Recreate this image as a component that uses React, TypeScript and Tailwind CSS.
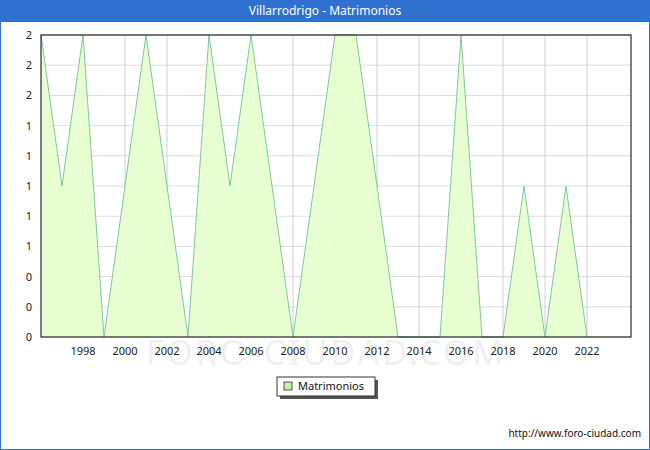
export default function App() {
  const data = [2,1,2,0,1,2,1,0,2,1,2,1,0,1,2,2,1,0,0,0,2,0,0,1,0,1,0];
  const x0 = 40, dx = 21, yb = 337, yt = 35;
  const y = (v: number) => yb - (v / 2) * (yb - yt);
  const pts = data.map((v, i) => `${x0 + i * dx},${y(v)}`).join(" ");
  const area = `${x0},${yb} ${pts} ${x0 + (data.length - 1) * dx},${yb}`;
  const yl = ["2","2","2","1","1","1","1","1","0","0","0"];
  const years = [1998,2000,2002,2004,2006,2008,2010,2012,2014,2016,2018,2020,2022];
  return (
    <div className="w-[650px] h-[450px] bg-white border border-t-0 border-[#3070d0] flex flex-col font-['DejaVu_Sans',sans-serif]">
      <div className="h-[22px] bg-[#3070d0] text-white text-[12px] flex items-center justify-center">Villarrodrigo - Matrimonios</div>
      <svg width="648" height="427" className="block">
        <g transform="translate(0,-22)">
          <text x="325" y="365" textAnchor="middle" fontSize="34" fill="#f0f0f4" letterSpacing="3">FORO-CIUDAD.COM</text>
          {yl.map((l, i) => {
            const yy = yt + i * (yb - yt) / 10;
            return <g key={i}>
              <line x1={40} x2={630} y1={yy} y2={yy} stroke="#dcdcdc" />
              <text x="31" y={yy + 4} textAnchor="end" fontSize="11" fill="#222">{l}</text>
            </g>;
          })}
          {years.map(yr => {
            const xx = x0 + (yr - 1996) * dx;
            return <g key={yr}>
              <line x1={xx} x2={xx} y1={yt} y2={yb} stroke="#d0d0d0" />
              <text x={xx} y={355} textAnchor="middle" fontSize="11" fill="#222">{yr}</text>
            </g>;
          })}
          <polygon points={area} fill="#e4ffcc" fillOpacity="0.9" />
          <polyline points={pts} fill="none" stroke="#80c8a0" strokeWidth="1" />
          <rect x={40} y={35} width={590} height={302} fill="none" stroke="#000" />
          <rect x={279} y={380} width={98} height={19} fill="#555" />
          <rect x={276} y={377} width={98} height={19} fill="#fff" stroke="#333" />
          <rect x={283} y={382} width={8} height={8} fill="#c8f0a0" stroke="#555" />
          <text x={297} y={390} fontSize="11" fill="#111">Matrimonios</text>
          <text x={640} y={437} textAnchor="end" fontSize="10" fill="#111">http://www.foro-ciudad.com</text>
        </g>
      </svg>
    </div>
  );
}
